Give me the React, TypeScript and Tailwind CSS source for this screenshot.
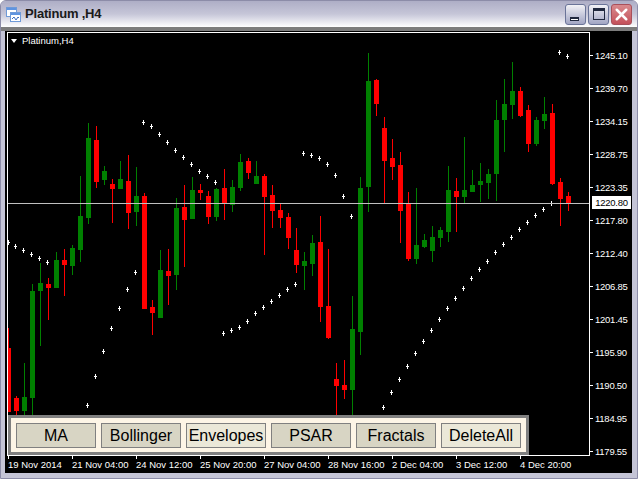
import { X } from 'lucide-react'

// cx, body top, body bottom, high, low, up?
const candles: [number, number, number, number, number, number][] = [
  [8, 348, 412, 328, 412, 0], [16, 398, 411, 396, 416, 0], [24, 397, 411, 363, 415, 1], [32, 291, 398, 284, 415, 1],
  [40, 283, 291, 263, 346, 1], [48, 284, 288, 278, 320, 0], [56, 260, 288, 252, 288, 1], [64, 260, 265, 249, 296, 0],
  [72, 248, 266, 245, 275, 1], [80, 216, 250, 176, 262, 1], [88, 138, 218, 123, 224, 1], [96, 140, 182, 126, 188, 0],
  [104, 171, 180, 166, 185, 1], [112, 184, 189, 179, 223, 0], [120, 179, 189, 161, 189, 1], [128, 181, 213, 155, 229, 0],
  [136, 196, 212, 167, 226, 1], [144, 196, 309, 193, 309, 0], [152, 307, 313, 300, 335, 0], [160, 270, 318, 250, 318, 1],
  [168, 271, 276, 249, 305, 0], [176, 208, 275, 198, 290, 1], [184, 207, 220, 185, 267, 0], [192, 190, 219, 177, 219, 1],
  [200, 190, 193, 184, 200, 0], [208, 196, 217, 191, 224, 0], [216, 189, 217, 188, 221, 1], [224, 188, 204, 169, 220, 0],
  [232, 187, 205, 180, 212, 1], [240, 162, 188, 154, 191, 1], [248, 161, 173, 158, 179, 0], [256, 176, 184, 161, 184, 1],
  [264, 176, 197, 174, 255, 0], [272, 195, 211, 185, 228, 0], [280, 210, 218, 203, 228, 0], [288, 217, 238, 213, 249, 0],
  [296, 250, 265, 228, 273, 0], [304, 261, 266, 252, 290, 1], [312, 243, 264, 235, 276, 1], [320, 242, 307, 216, 322, 0],
  [328, 306, 338, 249, 339, 0], [336, 379, 386, 363, 415, 0], [344, 385, 390, 360, 399, 0], [352, 329, 390, 296, 415, 1],
  [360, 188, 332, 177, 355, 1], [368, 81, 187, 53, 212, 1], [376, 80, 104, 79, 116, 0], [384, 128, 161, 117, 203, 0],
  [392, 158, 167, 139, 180, 0], [400, 165, 211, 152, 243, 0], [408, 204, 259, 192, 261, 0], [416, 245, 259, 188, 264, 1],
  [424, 240, 247, 234, 248, 1], [432, 237, 251, 226, 262, 1], [440, 230, 238, 227, 247, 1], [448, 190, 232, 166, 242, 1],
  [456, 191, 197, 178, 232, 0], [464, 190, 197, 137, 204, 1], [472, 185, 192, 170, 192, 1], [480, 181, 185, 163, 202, 1],
  [488, 174, 183, 169, 199, 1], [496, 120, 174, 100, 201, 1], [504, 104, 120, 79, 152, 1], [512, 91, 105, 62, 119, 1],
  [520, 91, 116, 87, 117, 0], [528, 110, 144, 105, 152, 0], [536, 120, 144, 117, 146, 1], [544, 114, 121, 97, 129, 1],
  [552, 113, 184, 104, 185, 0], [560, 182, 199, 178, 226, 0], [568, 196, 204, 192, 211, 0],
]

const psar: [number, number][] = [
  [8, 242], [15, 246], [23, 250], [31, 254], [39, 258], [47, 262], [87, 405], [95, 376], [103, 351], [111, 328], [119, 308], [127, 289], [135, 272],
  [143, 122], [151, 126], [159, 134], [167, 142], [175, 150], [183, 157], [191, 164], [199, 171], [207, 176], [215, 182],
  [223, 333], [231, 330], [239, 327], [247, 321], [255, 313], [263, 307], [271, 301], [279, 295], [287, 289], [295, 284],
  [303, 153], [311, 155], [319, 158], [327, 164], [335, 175], [343, 196], [351, 216],
  [383, 407], [391, 392], [399, 379], [407, 366], [415, 353], [423, 341], [431, 330], [439, 319], [447, 308], [455, 298],
  [463, 288], [471, 278], [479, 269], [487, 261], [495, 252], [503, 244], [511, 237], [519, 229], [527, 222], [535, 215],
  [543, 209], [551, 203], [559, 52], [567, 56],
]

const prices = ['1245.10', '1239.70', '1234.15', '1228.75', '1223.35', '1217.80', '1212.40', '1206.85', '1201.45', '1195.90', '1190.50', '1184.95', '1179.55']
const times = ['19 Nov 2014', '21 Nov 04:00', '24 Nov 12:00', '25 Nov 20:00', '27 Nov 04:00', '28 Nov 16:00', '2 Dec 04:00', '3 Dec 12:00', '4 Dec 20:00']
const buttons = [
  { label: 'MA', active: false },
  { label: 'Bollinger', active: false },
  { label: 'Envelopes', active: true },
  { label: 'PSAR', active: false },
  { label: 'Fractals', active: false },
  { label: 'DeleteAll', active: true },
]

function WindowIcon() {
  return (
    <svg width="15" height="15" viewBox="0 0 15 15" shapeRendering="crispEdges" className="shrink-0">
      <rect x="0.5" y="0.5" width="10" height="9" fill="#fff" stroke="#6f9ad8" />
      <rect x="1" y="1" width="9" height="2" fill="#5f94e0" />
      <rect x="4.5" y="5.5" width="10" height="9" fill="#fff" stroke="#6f9ad8" />
      <rect x="5" y="6" width="9" height="2" fill="#5f94e0" />
      <path d="M6 12l2-2 2 3 2-3 1 1" fill="none" stroke="#3f6fc0" shapeRendering="auto" />
    </svg>
  )
}

function CaptionButton({ kind }: { kind: 'min' | 'max' | 'close' }) {
  if (kind === 'close') {
    return (
      <div className="w-[21px] h-[21px] rounded-[3px] border border-[#a8505a] bg-gradient-to-b from-[#d88a8e] to-[#c4505a] flex items-center justify-center">
        <X size={19} strokeWidth={3.2} color="#ffffff" />
      </div>
    )
  }
  return (
    <div className="w-[21px] h-[21px] rounded-[3px] border border-[#6a7498] bg-gradient-to-b from-[#f2f2f6] via-[#c8cadc] to-[#a2a6c4] relative flex items-end justify-center">
      {kind === 'min' ? (
        <div className="w-[9px] h-[4px] mb-[3px] mr-[2px] bg-white border border-[#20283e] border-t-2" />
      ) : (
        <div className="w-[12px] h-[12px] mb-[4px] border border-[#20283e] border-t-[3px]" />
      )}
    </div>
  )
}

function Chart() {
  return (
    <svg width="581" height="422" viewBox="8 33 581 422" shapeRendering="crispEdges" className="block">
      {candles.map(([cx, top, bottom, high, low, up]) => {
        const color = up ? '#008000' : '#ff0000'
        return (
          <g key={cx} fill={color}>
            <rect x={cx} y={high} width="1" height={low - high} />
            <rect x={cx - 2} y={top} width="5" height={bottom - top} />
          </g>
        )
      })}
      {psar.map(([x, y]) => (
        <g key={x} fill="#ffffff">
          <rect x={x} y={y - 2} width="1" height="5" />
          <rect x={x - 1} y={y} width="3" height="1" />
        </g>
      ))}
      <rect x="8" y="203" width="581" height="1" fill="#c0c0c0" />
    </svg>
  )
}

export default function App() {
  return (
    <div className="w-[638px] h-[479px] flex flex-col rounded-t-[6px] overflow-hidden bg-[#c4c4d6] border border-[#8c8ca8] font-['Liberation_Sans',sans-serif]">
      <div className="h-[26px] shrink-0 flex items-center px-[5px] bg-gradient-to-b from-[#aeaec6] via-[#c6c6d8] to-[#ffffff]">
        <WindowIcon />
        <span className="ml-[4px] text-[13px] font-bold text-[#1a1a1a] tracking-[-0.2px]">Platinum ,H4</span>
        <div className="ml-auto flex gap-[2px]">
          <CaptionButton kind="min" />
          <CaptionButton kind="max" />
          <CaptionButton kind="close" />
        </div>
      </div>
      <div className="flex-1 flex flex-col min-h-0 border-t-[4px] border-[#7c7c7c]">
        <div className="flex-1 min-h-0 ml-[4px] mr-[5px] mb-[5px] bg-black flex flex-col pl-[2px]">
          <div className="h-[1px] shrink-0" />
          <div className="flex h-[424px] shrink-0">
            <div className="relative w-[583px] h-[424px] shrink-0 border border-white overflow-hidden">
              <Chart />
              <div className="absolute left-[3px] top-[3px] flex items-center gap-[5px] text-white text-[9.5px] leading-none">
                <span className="w-0 h-0 border-x-[3px] border-x-transparent border-t-[4px] border-t-white" />
                Platinum,H4
              </div>
              <div className="absolute left-0 bottom-0 w-[521px] h-[40px] border-[3px] border-[#808080] bg-[#fdf5e6] flex items-center gap-[5px] pl-[5px]">
                {buttons.map(b => (
                  <div
                    key={b.label}
                    className={`w-[80px] h-[25px] shrink-0 border border-[#808080] flex items-center justify-center pt-[2px] text-[16px] text-black ${b.active ? 'bg-[#ebe8d8]' : 'bg-[#d8d5c4]'}`}
                  >
                    {b.label}
                  </div>
                ))}
              </div>
            </div>
            <div className="relative flex-1 h-[424px] flex flex-col pt-[7px] text-white text-[9.5px] leading-none tracking-[-0.25px]">
              {prices.map(p => (
                <div key={p} className="h-[33px] shrink-0 flex items-center gap-[2px]">
                  <span className="w-[3px] h-[1px] bg-white" />
                  <span>{p}</span>
                </div>
              ))}
              <div className="absolute left-[2px] top-[164px] w-[39px] h-[13px] bg-white text-black flex items-center justify-center">1220.80</div>
            </div>
          </div>
          <div className="h-[17px] shrink-0 flex pl-[1px] text-white text-[9.5px] leading-none">
            {times.map(t => (
              <div key={t} className="w-[64px] shrink-0 flex flex-col">
                <span className="w-[1px] h-[3px] bg-white" />
                <span className="mt-[1px] whitespace-nowrap">{t}</span>
              </div>
            ))}
          </div>
        </div>
      </div>
    </div>
  )
}
